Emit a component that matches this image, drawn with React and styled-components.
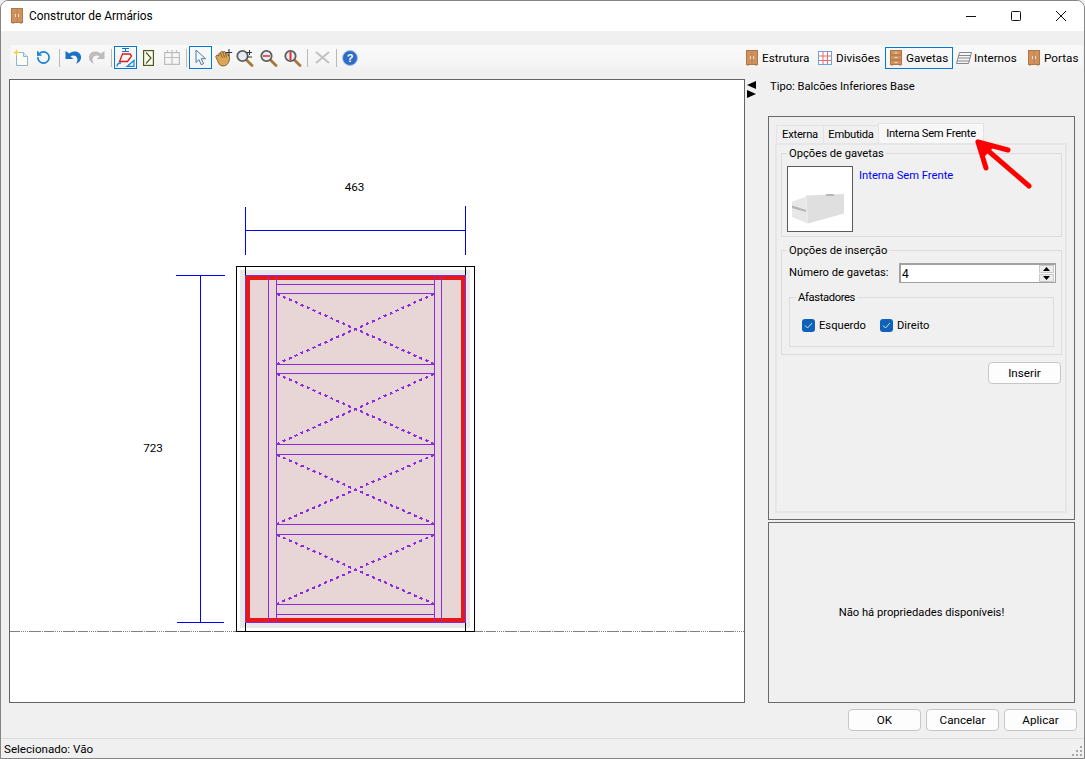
import React from 'react';
import styled, { createGlobalStyle } from 'styled-components';
import { RotateCcw } from 'lucide-react';

const GlobalStyle = createGlobalStyle`
  html, body {
    margin: 0;
    background: #f0f0f0;
    overflow: hidden;
  }
  * {
    box-sizing: border-box;
  }
`;

const Window = styled.div`
  width: 1085px;
  height: 759px;
  display: flex;
  flex-direction: column;
  background: #f0f0f0;
  border: 1px solid #858585;
  border-radius: 8px 8px 0 0;
  overflow: hidden;
  font-family: Roboto, "Liberation Sans", sans-serif;
  font-size: 11.2px;
  line-height: 14px;
  color: #000;
`;

const TitleBar = styled.div`
  height: 30px;
  flex: none;
  display: flex;
  align-items: center;
  background: #fff;
  padding-left: 10px;
  font-size: 11.9px;
`;

const TitleText = styled.span`
  margin-left: 6px;
`;

const WindowControls = styled.div`
  margin-left: auto;
  padding-right: 1px;
  display: flex;
  height: 29px;
  align-self: flex-start;
`;

const ControlButton = styled.div`
  width: 45px;
  height: 100%;
  display: flex;
  align-items: center;
  justify-content: center;
`;

const ToolbarRow = styled.div`
  height: 27px;
  margin: 14px 1px 0 9px;
  padding-top: 1px;
  flex: none;
  display: flex;
  align-items: flex-start;
  justify-content: space-between;
  background: linear-gradient(#f9f9f9, #f6f6f6 60%, #f0f0f0);
  border-radius: 3px 3px 0 0;
  font-size: 11.7px;
`;

const ToolGroup = styled.div`
  display: flex;
  align-items: center;
  height: 23px;
`;

const ToolIcon = styled.div`
  width: ${p => p.$w || 22}px;
  height: 23px;
  flex: none;
  display: flex;
  align-items: center;
  justify-content: center;
  border: 1px solid ${p => (p.$active ? '#0078d7' : 'transparent')};
`;

const ToolSeparator = styled.div`
  width: 1px;
  height: 18px;
  flex: none;
  margin: 0 ${p => p.$gap || 3}px;
  background: #b9b9b9;
`;

const PanelButton = styled.div`
  width: ${p => p.$w}px;
  height: 22px;
  flex: none;
  display: flex;
  align-items: center;
  gap: ${p => p.$gap || 4}px;
  padding-left: ${p => p.$pad || 3}px;
  border: 1px solid ${p => (p.$active ? '#0078d7' : 'transparent')};
`;

const Main = styled.div`
  flex: none;
  height: 624px;
  margin-top: 7px;
  padding-left: 8px;
  display: flex;
`;

const Canvas = styled.div`
  width: 736px;
  height: 624px;
  flex: none;
  background: #fff;
  border: 1px solid #646464;
`;

const Splitter = styled.div`
  width: 23px;
  flex: none;
  display: flex;
  flex-direction: column;
  padding: 2px 0 0 2px;
  gap: 1px;
`;

const SideColumn = styled.div`
  width: 307px;
  flex: none;
  position: relative;
  display: flex;
  flex-direction: column;
`;

const TypeLabel = styled.div`
  height: 37px;
  padding: 1px 0 0 2px;
`;

const OuterBox = styled.div`
  height: 404px;
  border: 1px solid #6a6a6a;
  padding: 6px 7px 6px 6px;
  display: flex;
  flex-direction: column;
`;

const TabRow = styled.div`
  display: flex;
  align-items: flex-end;
  height: 20px;
  padding-left: 2px;
  flex: none;
`;

const Tab = styled.div`
  width: ${p => p.$w}px;
  height: ${p => (p.$active ? 20 : 18)}px;
  display: flex;
  align-items: center;
  justify-content: center;
  background: ${p => (p.$active ? '#f8f8f8' : '#f0f0f0')};
  border: 1px solid #e3e3e3;
  border-bottom: none;
  margin-left: -1px;
  letter-spacing: -0.25px;
`;

const TabPage = styled.div`
  flex: 1;
  border: 2px solid #e6e6e6;
  padding: 0 3px 0 4px;
`;

const GroupBox = styled.fieldset`
  margin: ${p => p.$top || 0}px 0 0;
  padding: ${p => p.$pad || '5px 5px 4px'};
  border: 1px solid #dcdcdc;
  min-width: 0;
`;

const GroupTitle = styled.legend`
  padding: 2px 2px 0;
  margin-left: ${p => p.$shift || 0}px;
  line-height: 14px;
  letter-spacing: ${p => (p.$tight ? '-0.35px' : 'normal')};
`;

const PreviewRow = styled.div`
  display: flex;
  gap: 6px;
`;

const PreviewBox = styled.div`
  width: 66px;
  height: 66px;
  background: #fff;
  border: 1px solid #5a5a5a;
`;

const DrawerLink = styled.span`
  margin-top: 3px;
  color: #0000ff;
`;

const FieldRow = styled.div`
  display: grid;
  grid-template-columns: 110px 157px;
  align-items: center;
`;

const SpinBox = styled.div`
  height: 20px;
  background: #fff;
  border: 1px solid #a2a2a2;
  border-width: 2px 1px 1px 2px;
  display: flex;
  align-items: center;
  justify-content: space-between;
  padding-left: 1px;
  font-size: 12px;
`;

const SpinButtons = styled.div`
  width: 15px;
  height: 100%;
  display: flex;
  flex-direction: column;
  gap: 1px;
  background: #fff;
  margin-right: 1px;
`;

const SpinArrow = styled.div`
  flex: 1;
  background: #ededed;
  border: 1px solid #c8c8c8;
  display: flex;
  align-items: center;
  justify-content: center;
`;

const CheckRow = styled.div`
  display: flex;
  align-items: center;
  height: 13px;
  padding-left: 5px;
`;

const CheckItem = styled.label`
  display: flex;
  align-items: center;
  gap: 4px;
  width: ${p => p.$w}px;
`;

const CheckMark = styled.div`
  width: 13px;
  height: 13px;
  border-radius: 3px;
  background: #0f62b8;
  display: flex;
  align-items: center;
  justify-content: center;
`;

const InsertRow = styled.div`
  display: flex;
  justify-content: flex-end;
  margin: 7px 1px 0 0;
`;

const PushButton = styled.div`
  width: 73px;
  height: 22px;
  display: flex;
  align-items: center;
  justify-content: center;
  background: #fdfdfd;
  border: 1px solid #c6c6c6;
  border-radius: 4px;
  font-size: 11.7px;
`;

const PropertyBox = styled.div`
  height: 181px;
  margin-top: 2px;
  padding-top: 1px;
  border: 1px solid #6a6a6a;
  display: flex;
  align-items: center;
  justify-content: center;
`;

const ArrowMark = styled.svg`
  position: absolute;
  left: 205px;
  top: 58px;
  pointer-events: none;
`;

const FooterButtons = styled.div`
  flex: none;
  margin-top: 6px;
  padding-right: 7px;
  display: flex;
  justify-content: flex-end;
  gap: 5px;
`;

const StatusBar = styled.div`
  margin-top: 7px;
  flex: 1;
  border-top: 1px solid #dadada;
  padding-left: 3px;
  display: flex;
  align-items: center;
  justify-content: space-between;
  font-size: 11.6px;
`;

const Grip = styled.svg`
  align-self: flex-end;
  margin: 0 1px 1px 0;
`;

/* ---- drawn icons ---- */

const Wardrobe = () => (
  <svg width="12" height="16" viewBox="0 0 12 16">
    <rect x="0.5" y="0.5" width="11" height="14" fill="#d0915f" stroke="#b27645" />
    <path d="M6 1v13" stroke="#b98455" />
    <rect x="4" y="6" width="1" height="3" fill="#f3e4d0" />
    <rect x="7" y="6" width="1" height="3" fill="#f3e4d0" />
    <path d="M1 15h2M9 15h2" stroke="#b27645" />
  </svg>
);

const DrawerChest = () => (
  <svg width="12" height="16" viewBox="0 0 12 16">
    <rect x="0.5" y="0.5" width="11" height="14" fill="#d0915f" stroke="#b27645" />
    <path d="M1 5h10M1 10h10" stroke="#a8703f" />
    <path d="M4.500 3h3M4.500 7.500h3M4.500 12.500h3" stroke="#f3e4d0" />
    <path d="M1 15h2M9 15h2" stroke="#b27645" />
  </svg>
);

const GridIcon = () => (
  <svg width="14" height="14" viewBox="0 0 14 14">
    <rect x="0.5" y="0.5" width="13" height="13" fill="#fff" stroke="#6aa5da" />
    <path d="M5 1v12M9.500 1v12M1 5h12M1 9.500h12" stroke="#e86a6a" />
  </svg>
);

const ShelvesIcon = () => (
  <svg width="16" height="14" viewBox="0 0 16 14" fill="none" stroke="#858585">
    <path d="M3.500 1.500h12l-3 11h-12zM2.800 4.500h12M2 7h12M1.300 10h12" />
  </svg>
);

const NewIcon = () => (
  <svg width="16" height="17" viewBox="0 0 16 17">
    <path d="M3.500 3.500h7l4 4v9h-11z" fill="#fdfdf6" stroke="#8db4d8" />
    <path d="M10.500 3.500v4h4" fill="#dbe8f3" stroke="#8db4d8" />
    <path d="M3.500 0l1 2.500L7 3.500l-2.500 1-1 2.500-1-2.500L0 3.500l2.500-1z" fill="#f5d33f" />
  </svg>
);

const UndoIcon = ({ color, flip }) => (
  <svg width="17" height="15" viewBox="0 0 17 15" style={flip ? { transform: 'scaleX(-1)' } : undefined}>
    <path d="M0.500 1v8h8L5.500 6.500c2.500-1.800 6-1 6.800 2 .4 1.500 0 3.500-1.300 5.500 3.500-1.500 5.500-4.500 5-7.500C15.200 1.500 9 0 4.300 3.500z" fill={color} />
  </svg>
);

const SectionIcon = () => (
  <svg width="19" height="19" viewBox="0 0 19 19" fill="none">
    <path d="M6 .5h7M6 3.500h7" stroke="#1c6fb8" strokeWidth="1" />
    <path d="M9.500 .5v3" stroke="#1c6fb8" strokeWidth="1" />
    <path d="M6.500 6h7.500l1.500 2-4 5.500H3.500z" stroke="#e01818" strokeWidth="1.300" />
    <path d="M1 18.500c0-2.500 1.500-3.500 4-3.500" stroke="#1c8ad8" strokeWidth="1.300" />
    <path d="M11 18.500h7v-6z" stroke="#1c8ad8" strokeWidth="1.300" />
  </svg>
);

const PageNextIcon = () => (
  <svg width="11" height="16" viewBox="0 0 11 16" fill="none" stroke="#4c5a1e" strokeWidth="1.200">
    <rect x="0.600" y="0.600" width="9.800" height="14.800" fill="#fffef4" />
    <path d="M3 2.500 8 8l-5 5.500" />
  </svg>
);

const TableIcon = () => (
  <svg width="16" height="15" viewBox="0 0 16 15" fill="none" stroke="#bdbdbd" strokeWidth="1.200">
    <rect x="0.600" y="2.600" width="14.800" height="11.800" />
    <path d="M0.600 7.500h14.800M8 2.500v12M3.500 0v3M8 0v3M12.500 0v3" />
  </svg>
);

const PointerIcon = () => (
  <svg width="12" height="17" viewBox="0 0 12 17">
    <path d="M1 1v12.500l3-2.800 2.200 5 2.300-1-2.200-5H10.500z" fill="#f3f7fb" stroke="#4a78a8" />
  </svg>
);

const HandIcon = () => (
  <svg width="18" height="18" viewBox="0 0 18 18">
    <path d="M1 7c1-1.500 2-1 3 0C3.500 5 4 3.500 5.500 4c0-1.500 1.500-2 2.500-1 1-1 2.500-.5 2.700 1 1.300-.2 2 1 2 2 1.300.2 1.800 1.500 1.800 3 0 4.500-2.500 8-6.500 8-3.500 0-4.500-3-5.500-5.500S.5 8 1 7z" fill="#dba559" stroke="#6f4a1c" strokeWidth="0.800" />
    <path d="M5.500 4l2 5M8 3l1.500 5.500M10.700 4l.6 4.500" stroke="#6f4a1c" strokeWidth="0.700" fill="none" />
    <path d="M14 0v7M10.800 3.500h6.400" stroke="#333" strokeWidth="1.100" />
  </svg>
);

const Lens = ({ children, width = 18 }) => (
  <svg width={width} height="18" viewBox={`0 0 ${width} 18`}>
    <path d="M10.500 11 16 16.500" stroke="#a8763a" strokeWidth="2.800" strokeLinecap="round" />
    <circle cx="6.500" cy="7" r="5.200" fill="#e6edf2" stroke="#5c5c5c" strokeWidth="1.800" />
    {children}
  </svg>
);

const CloseIcon = () => (
  <svg width="15" height="13" viewBox="0 0 15 13" stroke="#c2c2c2" strokeWidth="2" fill="none">
    <path d="M1 1l13 11M14 1 1 12" />
  </svg>
);

const HelpIcon = () => (
  <svg width="16" height="16" viewBox="0 0 16 16">
    <circle cx="8" cy="8" r="7.500" fill="#2f6cc4" stroke="#a9c4e8" />
    <text x="8" y="12" textAnchor="middle" fontFamily="Liberation Sans, sans-serif" fontWeight="700" fontSize="11" fill="#fff">?</text>
  </svg>
);

const DrawerPreview = () => (
  <svg width="64" height="64" viewBox="0 0 64 64">
    <defs>
      <filter id="soft"><feGaussianBlur stdDeviation="0.400" /></filter>
    </defs>
    <g filter="url(#soft)">
      <path d="M18 28.500 56 27v19.500L20 56.500z" fill="#e0dfdf" />
      <path d="M4 34.500 18 30l2 26.500L4 50z" fill="#e8e6e6" />
      <path d="M4 38.500 18 43v2L4 41z" fill="#b4b4b4" />
      <path d="M38 27h8v2h-8z" fill="#b8b8b8" />
    </g>
  </svg>
);

const DIVIDER_LINES = [284, 293, 364, 373, 444, 454, 524, 534, 604, 614];
const DRAWER_BAYS = [[293, 364], [373, 444], [454, 524], [534, 604]];

const CabinetDrawing = () => (
  <svg width="734" height="622" viewBox="10 80 734 622" shapeRendering="crispEdges">
    <path d="M10 631.500h734" stroke="#808080" strokeDasharray="10 1 1 1 1 1 1 1 1 1 12 1 1 1" />
    <rect x="236.500" y="266.500" width="238" height="365" fill="#fff" stroke="#000" />
    <rect x="240" y="270" width="230" height="358" fill="#e8e8e8" />
    <path d="M245.500 266v9M465.500 266v9M245.500 622v9M465.500 622v9" stroke="#000" />
    <rect x="245" y="275" width="221" height="348" fill="#e81818" />
    <rect x="250" y="280" width="211" height="338" fill="#e8d6d6" />
    <g stroke="#8a2be2" fill="none">
      <rect x="245.500" y="275.500" width="220" height="347" />
      <path d="M268.500 275v348M276.500 275v348M434.500 275v348M441.500 275v348" />
      {DIVIDER_LINES.map(y => (
        <path key={y} d={`M276 ${y + 0.5}h159`} />
      ))}
    </g>
    <g stroke="#8a2be2" fill="none" strokeWidth="2.200" strokeDasharray="3 3.500">
      {DRAWER_BAYS.map(([top, bottom]) => (
        <path key={top} d={`M277 ${top + 1}L434 ${bottom}M434 ${top + 1}L277 ${bottom}`} />
      ))}
    </g>
    <g stroke="#0000ff" fill="none">
      <path d="M245.500 207v48M465.500 206v49M245 230.500h221" />
      <path d="M200.500 275v348M176 275.500h49M177 622.500h47" />
    </g>
    <g fontFamily="Roboto, Liberation Sans, sans-serif" fontSize="11.700" fill="#000" textAnchor="middle" shapeRendering="auto">
      <text x="354.500" y="191">463</text>
      <text x="153" y="452">723</text>
    </g>
  </svg>
);

function App() {
  return (
    <>
      <GlobalStyle />
      <Window>
        <TitleBar>
          <Wardrobe />
          <TitleText>Construtor de Armários</TitleText>
          <WindowControls>
            <ControlButton>
              <svg width="10" height="10" stroke="#111"><path d="M0 5.500h10" /></svg>
            </ControlButton>
            <ControlButton>
              <svg width="10" height="10" fill="none" stroke="#111"><rect x="0.500" y="0.500" width="9" height="9" rx="1" /></svg>
            </ControlButton>
            <ControlButton>
              <svg width="10" height="10" stroke="#111"><path d="M0 0l10 10M10 0 0 10" /></svg>
            </ControlButton>
          </WindowControls>
        </TitleBar>

        <ToolbarRow>
          <ToolGroup>
            <ToolIcon $w={21}><NewIcon /></ToolIcon>
            <ToolIcon $w={25}><RotateCcw size={15} color="#1580d0" strokeWidth={2.600} /></ToolIcon>
            <ToolSeparator />
            <ToolIcon $w={21}><UndoIcon color="#1b72c4" /></ToolIcon>
            <ToolIcon $w={25}><UndoIcon color="#bdbdbd" flip /></ToolIcon>
            <ToolSeparator $gap={2} />
            <ToolIcon $w={23} $active><SectionIcon /></ToolIcon>
            <ToolIcon $w={23}><PageNextIcon /></ToolIcon>
            <ToolIcon $w={24}><TableIcon /></ToolIcon>
            <ToolSeparator $gap={2} />
            <ToolIcon $w={23} $active><PointerIcon /></ToolIcon>
            <ToolIcon $w={23}><HandIcon /></ToolIcon>
            <ToolIcon $w={21}>
              <Lens width={19}>
                <path d="M13.500 1v5M11 3.500h5M11 8h5" stroke="#333" />
              </Lens>
            </ToolIcon>
            <ToolIcon $w={25}>
              <Lens>
                <path d="M3 7h7" stroke="#d03030" strokeWidth="1.500" />
              </Lens>
            </ToolIcon>
            <ToolIcon $w={23}>
              <Lens>
                <path d="M6.500 3v8" stroke="#e03030" strokeWidth="2" />
              </Lens>
            </ToolIcon>
            <ToolSeparator />
            <ToolIcon $w={22}><CloseIcon /></ToolIcon>
            <ToolSeparator />
            <ToolIcon $w={19}><HelpIcon /></ToolIcon>
          </ToolGroup>
          <ToolGroup>
            <PanelButton $w={72} $pad={3}><Wardrobe />Estrutura</PanelButton>
            <PanelButton $w={71} $pad={3}><GridIcon />Divisões</PanelButton>
            <PanelButton $w={68} $pad={4} $active><DrawerChest />Gavetas</PanelButton>
            <PanelButton $w={72} $pad={2} $gap={2}><ShelvesIcon />Internos</PanelButton>
            <PanelButton $w={58} $pad={2}><Wardrobe />Portas</PanelButton>
          </ToolGroup>
        </ToolbarRow>

        <Main>
          <Canvas>
            <CabinetDrawing />
          </Canvas>
          <Splitter>
            <svg width="9" height="8"><path d="M9 0v8L0 4z" fill="#000" /></svg>
            <svg width="9" height="8"><path d="M0 0v8l9-4z" fill="#000" /></svg>
          </Splitter>
          <SideColumn>
            <TypeLabel>Tipo: Balcões Inferiores Base</TypeLabel>
            <OuterBox>
              <TabRow>
                <Tab $w={48}>Externa</Tab>
                <Tab $w={56}>Embutida</Tab>
                <Tab $w={106} $active>Interna Sem Frente</Tab>
              </TabRow>
              <TabPage>
                <GroupBox>
                  <GroupTitle>Opções de gavetas</GroupTitle>
                  <PreviewRow>
                    <PreviewBox><DrawerPreview /></PreviewBox>
                    <DrawerLink>Interna Sem Frente</DrawerLink>
                  </PreviewRow>
                </GroupBox>
                <GroupBox $top={5} $pad="5px 7px 7px">
                  <GroupTitle $shift={-2}>Opções de inserção</GroupTitle>
                  <FieldRow>
                    <span>Número de gavetas:</span>
                    <SpinBox>
                      4
                      <SpinButtons>
                        <SpinArrow>
                          <svg width="7" height="4"><path d="M3.500 0 7 4H0z" fill="#000" /></svg>
                        </SpinArrow>
                        <SpinArrow>
                          <svg width="7" height="4"><path d="M3.500 4 7 0H0z" fill="#000" /></svg>
                        </SpinArrow>
                      </SpinButtons>
                    </SpinBox>
                  </FieldRow>
                  <GroupBox $top={6} $pad="14px 7px 14px">
                    <GroupTitle $tight $shift={-1}>Afastadores</GroupTitle>
                    <CheckRow>
                      <CheckItem $w={78}>
                        <CheckMark>
                          <svg width="9" height="9" fill="none" stroke="#cfe0f3" strokeWidth="1"><path d="M1 4.500 3.500 7 8 2" /></svg>
                        </CheckMark>
                        Esquerdo
                      </CheckItem>
                      <CheckItem $w={70}>
                        <CheckMark>
                          <svg width="9" height="9" fill="none" stroke="#cfe0f3" strokeWidth="1"><path d="M1 4.500 3.500 7 8 2" /></svg>
                        </CheckMark>
                        Direito
                      </CheckItem>
                    </CheckRow>
                  </GroupBox>
                </GroupBox>
                <InsertRow>
                  <PushButton>Inserir</PushButton>
                </InsertRow>
              </TabPage>
            </OuterBox>
            <PropertyBox>Não há propriedades disponíveis!</PropertyBox>
            <ArrowMark width="60" height="54" viewBox="0 0 60 54" fill="none" stroke="#f00" strokeWidth="5" strokeLinecap="round" strokeLinejoin="round">
              <path d="M5 5 56 49M5 5l30 8M5 5l8 26" />
              <path d="M5 5l16 5-11 11z" fill="#f00" stroke="none" />
            </ArrowMark>
          </SideColumn>
        </Main>

        <FooterButtons>
          <PushButton>OK</PushButton>
          <PushButton>Cancelar</PushButton>
          <PushButton>Aplicar</PushButton>
        </FooterButtons>

        <StatusBar>
          Selecionado: Vão
          <Grip width="12" height="12" fill="#a8a8a8">
            <rect x="9" y="1" width="2" height="2" />
            <rect x="5" y="5" width="2" height="2" />
            <rect x="9" y="5" width="2" height="2" />
            <rect x="1" y="9" width="2" height="2" />
            <rect x="5" y="9" width="2" height="2" />
            <rect x="9" y="9" width="2" height="2" />
          </Grip>
        </StatusBar>
      </Window>
    </>
  );
}

export default App;
